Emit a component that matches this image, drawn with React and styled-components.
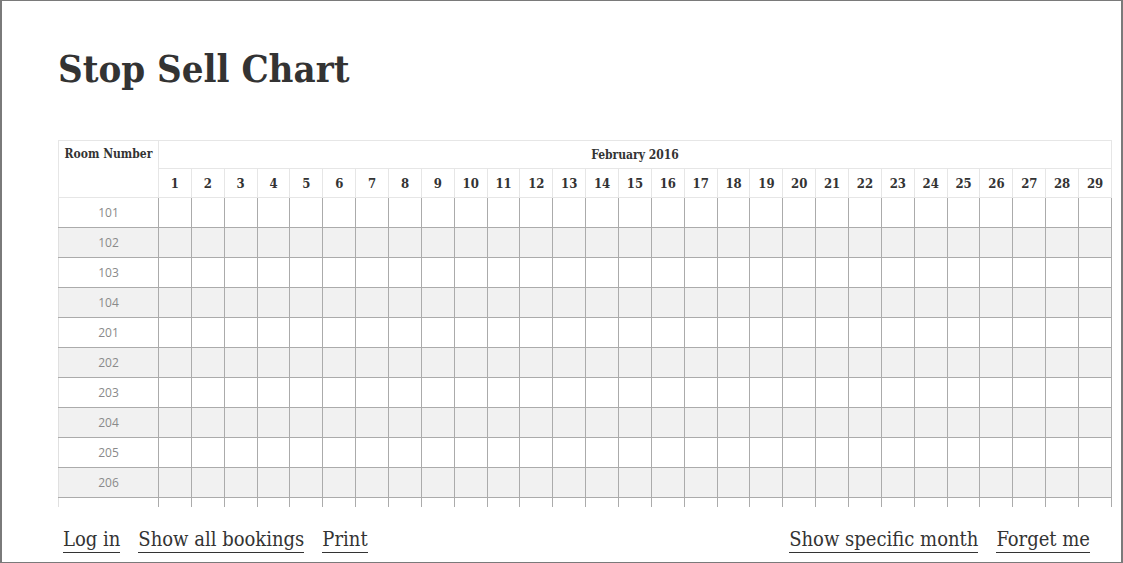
import React from "react";
import styled, { createGlobalStyle } from "styled-components";

const Global = createGlobalStyle`
  html, body { margin: 0; padding: 0; background: #fff; }
  body { font-family: "DejaVu Serif", "Liberation Serif", serif; color: #333; }
`;

const Frame = styled.div`
  box-sizing: border-box;
  width: 1123px;
  height: 563px;
  border-style: solid;
  border-color: #7a7a7a;
  border-width: 1px 2px 1px 2px;
  display: flex;
  flex-direction: column;
  overflow: hidden;
`;

const Title = styled.h1`
  margin: 43px 0 0 56px;
  font-family: "DejaVu Serif", serif;
  font-stretch: condensed;
  font-weight: 700;
  font-size: 38px;
  line-height: 50px;
  color: #333;
`;

const TableScroll = styled.div`
  margin: 46px 0 0 56px;
  width: 1054px;
  height: 367px;
  overflow: hidden;
  flex: none;
`;

const Table = styled.table`
  width: 1054px;
  border-collapse: collapse;
  table-layout: fixed;
`;

const HeadCell = styled.th`
  border: 1px solid #e6e6e6;
  font-family: "DejaVu Serif", serif;
  font-stretch: condensed;
  font-weight: 700;
  font-size: ${(p) => (p.$day ? 13 : 12)}px;
  color: #333;
  text-align: center;
  padding: 0;
  height: ${(p) => p.$h}px;
  vertical-align: ${(p) => (p.$top ? "top" : "middle")};
  line-height: ${(p) => (p.$top ? "27px" : "normal")};
  box-sizing: border-box;
`;

const Row = styled.tr`
  background: ${(p) => (p.$alt ? "#f1f1f1" : "#fff")};
`;

const RoomCell = styled.td`
  height: 30px;
  padding: 0;
  box-sizing: border-box;
  border: 1px solid #ababab;
  border-left-color: #e0e0e0;
  text-align: center;
  font-family: "Open Sans", "Noto Sans", sans-serif;
  font-size: 12px;
  color: #8a8a8a;
`;

const DayCell = styled.td`
  height: 30px;
  padding: 0;
  box-sizing: border-box;
  border: 1px solid #ababab;
`;

const Footer = styled.nav`
  display: flex;
  justify-content: space-between;
  align-items: flex-end;
  margin: 20px 31px 0 61px;
`;

const LinkGroup = styled.div`
  display: flex;
  gap: 18px;
`;

const FootLink = styled.a`
  font-family: "DejaVu Serif", serif;
  font-stretch: condensed;
  font-size: 20px;
  line-height: 24px;
  color: #333;
  text-decoration: none;
  border-bottom: 1px solid #333;
  padding-bottom: 1px;
  cursor: pointer;
`;

const days = Array.from({ length: 29 }, (_, i) => i + 1);
const rooms = ["101", "102", "103", "104", "201", "202", "203", "204", "205", "206", "301"];

export default function App() {
  return (
    <>
      <Global />
      <Frame>
        <Title>Stop Sell Chart</Title>
        <TableScroll>
          <Table>
            <colgroup>
              <col style={{ width: 100 }} />
              {days.map((d) => (
                <col key={d} />
              ))}
            </colgroup>
            <thead>
              <tr>
                <HeadCell rowSpan={2} $top $h={57}>
                  Room Number
                </HeadCell>
                <HeadCell colSpan={29} $h={28}>
                  February 2016
                </HeadCell>
              </tr>
              <tr>
                {days.map((d) => (
                  <HeadCell key={d} $h={29} $day>
                    {d}
                  </HeadCell>
                ))}
              </tr>
            </thead>
            <tbody>
              {rooms.map((r, i) => (
                <Row key={r} $alt={i % 2 === 1}>
                  <RoomCell>{r}</RoomCell>
                  {days.map((d) => (
                    <DayCell key={d} />
                  ))}
                </Row>
              ))}
            </tbody>
          </Table>
        </TableScroll>
        <Footer>
          <LinkGroup>
            <FootLink>Log in</FootLink>
            <FootLink>Show all bookings</FootLink>
            <FootLink>Print</FootLink>
          </LinkGroup>
          <LinkGroup>
            <FootLink>Show specific month</FootLink>
            <FootLink>Forget me</FootLink>
          </LinkGroup>
        </Footer>
      </Frame>
    </>
  );
}
